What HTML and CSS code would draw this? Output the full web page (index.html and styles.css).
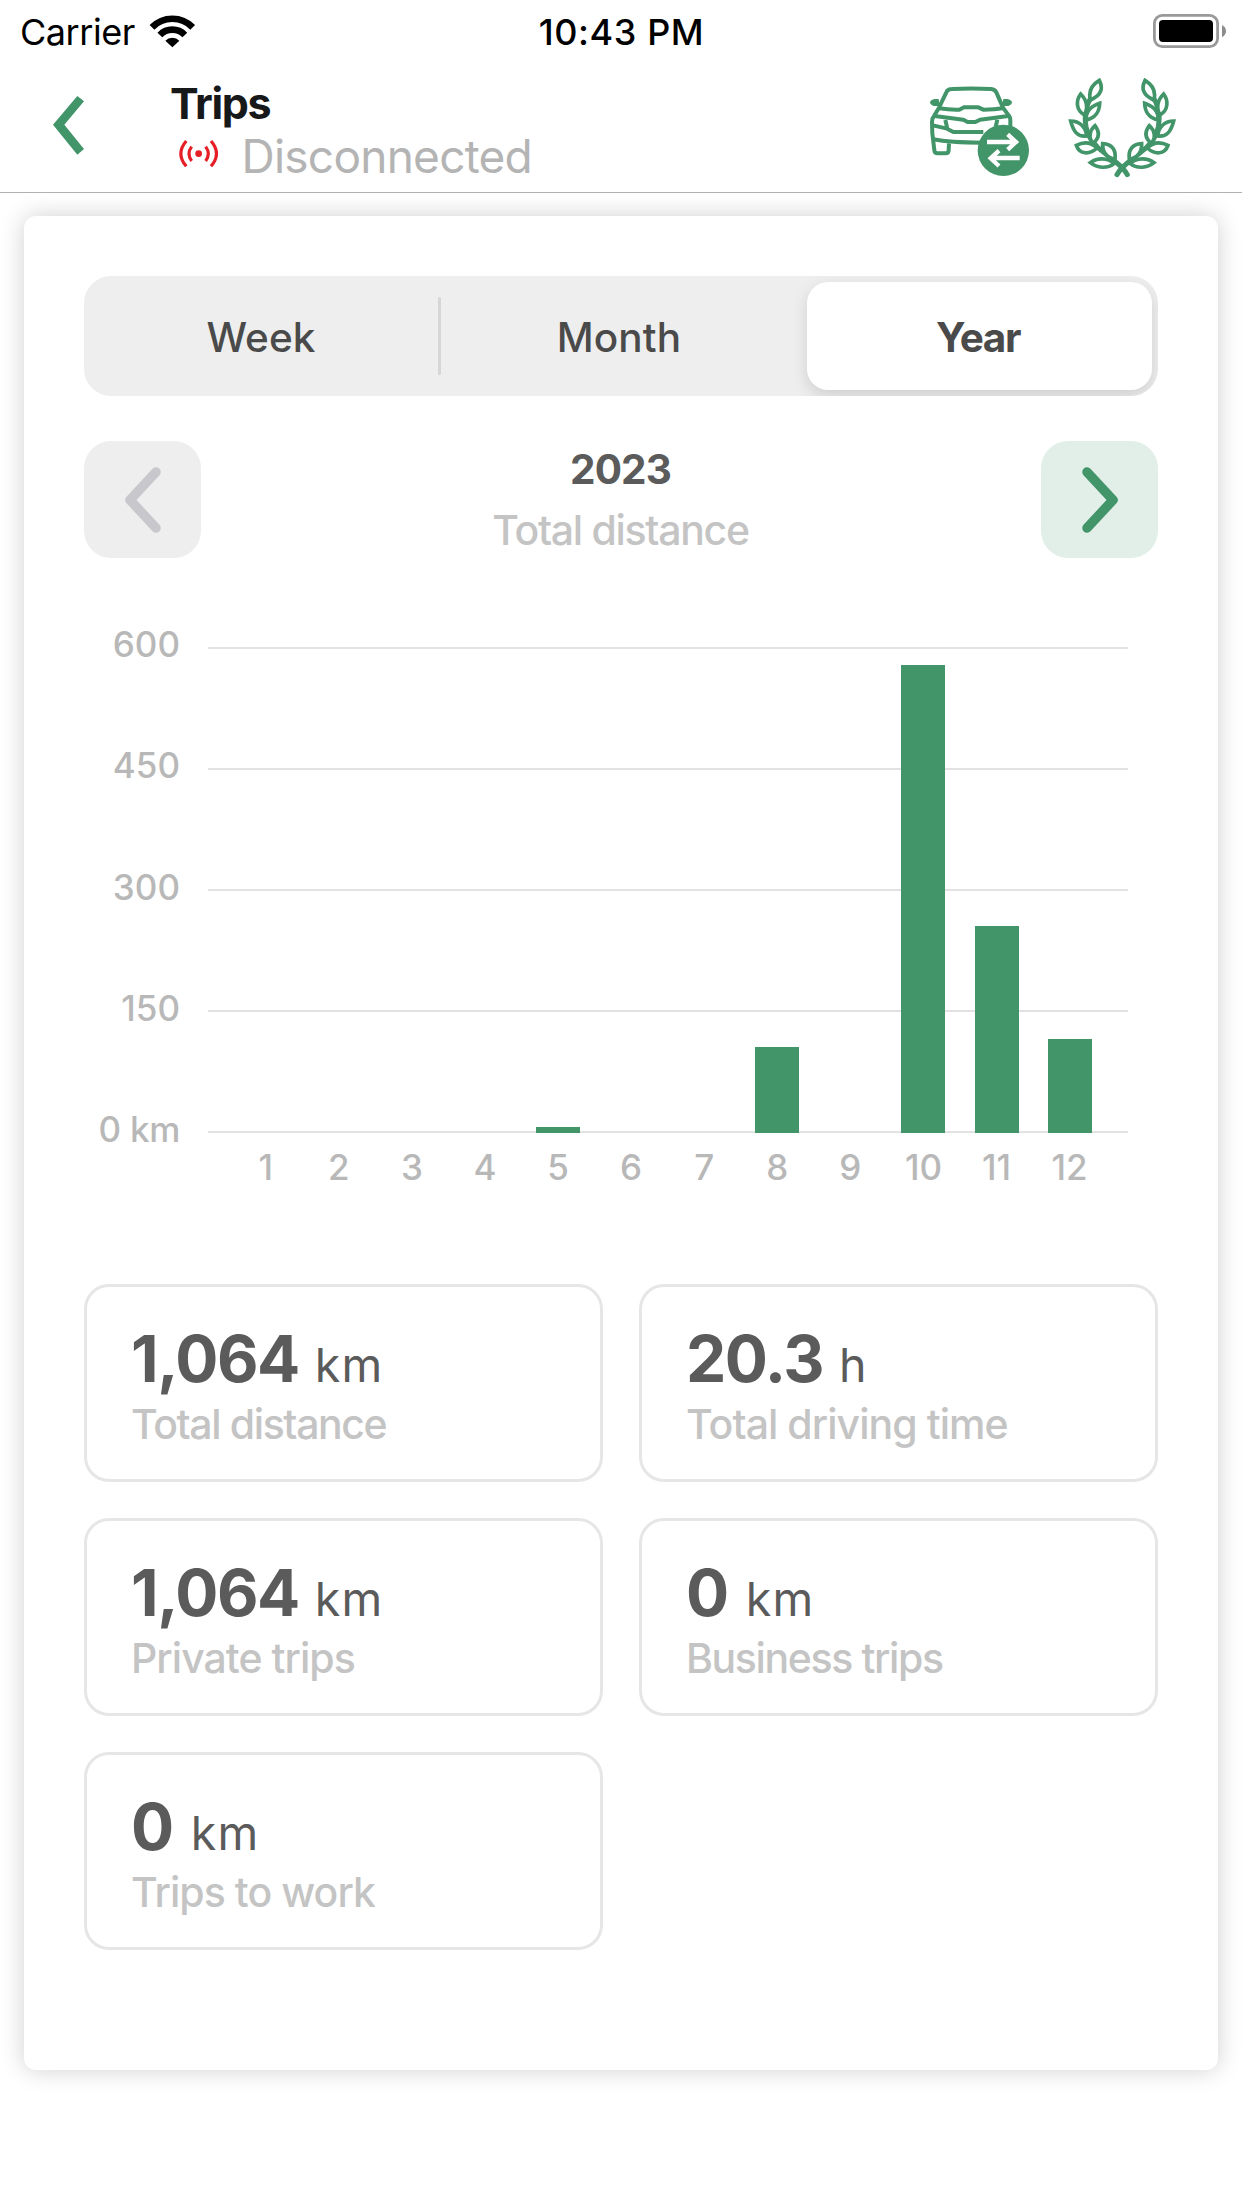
FILE: index.html
```html
<!DOCTYPE html>
<html lang="en">
<head>
<meta charset="utf-8">
<title>Trips</title>
<link rel="stylesheet" href="styles.css">
</head>
<body>
<div class="status-bar">
  <div class="carrier">
    <span class="carrier-name">Carrier</span>
    <svg class="wifi" viewBox="386 37 140 102" aria-hidden="true">
      <g fill="none" stroke="#000" stroke-width="20">
        <path d="M395 77A85 85 0 0 1 517 77"/>
        <path d="M418.5 100A52 52 0 0 1 493.5 100"/>
      </g>
      <path d="M456 137L435 117A29 29 0 0 1 477 117Z"/>
    </svg>
  </div>
  <div class="clock">10:43 PM</div>
  <div class="battery">
    <svg viewBox="0 0 74 34" aria-hidden="true">
      <rect x="1.4" y="1.4" width="63.2" height="31.2" rx="8" fill="none" stroke="#999" stroke-width="2.8"/>
      <rect x="6" y="6" width="54" height="22" rx="4"/>
      <path d="M69 11Q73 13 73 17T69 23Z" fill="#8c8c8c"/>
    </svg>
  </div>
</div>

<header class="app-bar">
  <svg class="back" viewBox="100 288 93 176" aria-label="Back"><path d="M173 288L193 304L134 374L193 447L173 464L100 374Z"/></svg>
  <div class="heading">
    <h1 class="title">Trips</h1>
    <div class="connection">
      <svg class="signal" viewBox="476 418 118 82" aria-hidden="true">
        <circle cx="535" cy="459" r="10"/>
        <path d="M514 438Q498 459 514 481M556 438Q572 459 556 481M498 421Q465 459 498 497M572 421Q605 459 572 497"/>
      </svg>
      <span class="connection-text">Disconnected</span>
    </div>
  </div>
  <svg class="car" viewBox="90 78 300 270" aria-label="Switch car">
    <g class="line">
      <path d="M147 250L146 270Q146 280 137 280H112Q104 280 103 271L97 220L96 185Q96 175 102 168L117 143L139 97Q143 87 155 87Q213 84 274 87Q284 88 289 97L309 143L326 166Q331 172 331 180V205"/>
      <path d="M117 145Q150 150 178 149L192 142H235L250 149Q285 149 308 145"/>
      <path d="M104 168L190 179L203 186H226L240 179L325 168"/>
      <path d="M99 196L141 206L160 216H250M136 180L142 206M292 179L287 200"/>
      <path d="M100 238Q150 248 245 248"/>
    </g>
    <path d="M90 127Q92 119 104 117L116 117L119 138H101Q91 135 90 127ZM336 127Q334 119 322 117L310 117L307 138H325Q335 135 336 127Z"/>
    <circle cx="310" cy="271" r="77"/>
    <path class="arrows" d="M261 246H346M323 223L348 246L323 269M359 294H274M297 272L272 295L297 318"/>
  </svg>
  <svg class="laurel" viewBox="504 54 324 300" aria-label="Achievements">
    <g id="branch">
      <path class="stem" d="M651 344Q662 325 685 307L740 262Q768 235 775 200Q781 165 772 140Q768 122 758 114"/>
      <path class="leaf" d="M735 61C724 82 726 105 762 120C768 95 757 74 735 61Z"/>
      <path class="leaf" d="M791 102C772 120 768 145 780 165C805 150 806 122 791 102Z"/>
      <path class="leaf" d="M734 130C735 155 744 172 774 180C776 152 760 139 734 130Z"/>
      <path class="leaf" d="M821 183C795 183 776 200 773 228C800 232 813 215 821 183Z"/>
      <path class="leaf" d="M748 197C733 217 735 235 754 250C768 234 765 212 748 197Z"/>
      <path class="leaf" d="M804 256C780 244 760 246 742 264C765 285 794 284 804 256Z"/>
      <path class="leaf" d="M725 251C697 252 684 270 688 298C715 292 726 276 725 251Z"/>
      <path class="leaf" d="M762 308C740 292 712 293 690 310C712 328 742 324 762 308Z"/>
    </g>
    <use href="#branch" transform="translate(1333 0) scale(-1 1)"/>
  </svg>
</header>

<main class="card">
  <div class="segments">
    <div class="segment">Week</div>
    <div class="divider"></div>
    <div class="segment">Month</div>
    <div class="segment selected">Year</div>
  </div>

  <div class="period">
    <div class="step disabled"><svg viewBox="0 0 117 117"><path d="M72 31L46 59L72 87"/></svg></div>
    <div class="period-text">
      <div class="period-year">2023</div>
      <div class="period-caption">Total distance</div>
    </div>
    <div class="step"><svg viewBox="0 0 117 117"><path d="M46 31L72 59L46 87"/></svg></div>
  </div>

  <div class="chart">
    <div class="y-axis"><span>600</span><span>450</span><span>300</span><span>150</span><span class="zero">0 km</span></div>
    <div class="plot">
      <div class="area">
        <div class="lines"><i></i><i></i><i></i><i></i><i></i></div>
        <div class="bars">
          <b></b><b></b><b></b><b></b><b style="height:1.15%"></b><b></b><b></b><b style="height:17.6%"></b><b></b><b style="height:96.4%"></b><b style="height:42.6%"></b><b style="height:19.4%"></b>
        </div>
      </div>
      <div class="x-axis"><span>1</span><span>2</span><span>3</span><span>4</span><span>5</span><span>6</span><span>7</span><span>8</span><span>9</span><span>10</span><span>11</span><span>12</span></div>
    </div>
  </div>

  <div class="stats">
    <div class="stat"><div class="value"><strong>1,064</strong><span>km</span></div><div class="label tight">Total distance</div></div>
    <div class="stat"><div class="value"><strong>20.3</strong><span>h</span></div><div class="label">Total driving time</div></div>
    <div class="stat"><div class="value"><strong>1,064</strong><span>km</span></div><div class="label">Private trips</div></div>
    <div class="stat"><div class="value"><strong class="zero">0</strong><span>km</span></div><div class="label tight">Business trips</div></div>
    <div class="stat"><div class="value"><strong class="zero">0</strong><span>km</span></div><div class="label">Trips to work</div></div>
  </div>
</main>
</body>
</html>
```
FILE: styles.css
```css
:root {
  --green: #429469;
}

* {
  box-sizing: border-box;
}

body {
  margin: 0;
  min-height: 2208px;
  background: #fff;
  font-family: Inter, "Liberation Sans", sans-serif;
}

svg {
  display: block;
  flex: none;
}

/* Status bar */
.status-bar {
  display: grid;
  grid-template-columns: 1fr auto 1fr;
  align-items: center;
  height: 60px;
  padding: 0 15px 0 20px;
  font-size: 36px;
  line-height: 60px;
  color: #000;
}

.carrier {
  display: flex;
  align-items: center;
}

.carrier-name {
  width: 129px;
  padding-top: 2px;
  letter-spacing: -0.45px;
}

.wifi {
  width: 46.7px;
  height: 34px;
}

.clock {
  padding: 2px 4px 0 0;
  font-weight: 500;
  letter-spacing: 0.6px;
}

.battery svg {
  width: 74px;
  height: 34px;
  margin-left: auto;
}

/* App bar */
.app-bar {
  display: flex;
  align-items: flex-start;
  height: 133px;
  padding: 0 66px 0 53px;
  border-bottom: 1px solid #b0b0b0;
}

.app-bar svg {
  fill: var(--green);
}

.app-bar .back {
  width: 31px;
  height: 58.7px;
  margin: 36px 86px 0 0;
}

.heading {
  flex: 1;
  padding-top: 18px;
}

.title {
  margin: 0;
  font-size: 43px;
  font-weight: 700;
  line-height: 51px;
  letter-spacing: -1.35px;
  color: #17181a;
}

.connection {
  display: flex;
  align-items: center;
  height: 54px;
  padding-left: 8.7px;
}

.app-bar .signal {
  width: 39.3px;
  height: 27.3px;
  margin: 0 23.5px 5px 0;
  fill: #e61e25;
}

.signal path {
  fill: none;
  stroke: #e61e25;
  stroke-width: 9.5;
}

.connection-text {
  font-size: 46px;
  line-height: 54px;
  letter-spacing: -0.75px;
  color: #b4b4b4;
}

.car {
  width: 100px;
  height: 90px;
  margin: 26px 38px 0 0;
}

.car .line {
  fill: none;
  stroke: var(--green);
  stroke-width: 12;
  stroke-linejoin: round;
}

.car .arrows {
  fill: none;
  stroke: #fff;
  stroke-width: 13;
}

.laurel {
  width: 108px;
  height: 100px;
  margin-top: 18px;
}

.laurel .stem {
  fill: none;
  stroke: var(--green);
  stroke-width: 15;
  stroke-linecap: round;
}

.laurel .leaf {
  fill: #fff;
  stroke: var(--green);
  stroke-width: 11;
}

/* Card */
.card {
  height: 1854px;
  margin: 23px 24px 0;
  padding: 60px;
  border-radius: 12px;
  background: #fff;
  box-shadow: 0 0 24px rgba(0, 0, 0, 0.19);
}

.segments {
  display: grid;
  grid-template-columns: 354px 3px 356px 1fr;
  height: 120px;
  border-radius: 27px;
  background: #eee;
  overflow: hidden;
}

.segment {
  display: flex;
  align-items: center;
  justify-content: center;
  padding-top: 2px;
  font-size: 40.5px;
  font-weight: 500;
  letter-spacing: 0.1px;
  color: #4a4a4a;
}

.segment.selected {
  margin: 6px 6px 6px 10px;
  padding-right: 3px;
  border-radius: 21px;
  background: #fff;
  box-shadow: 0 6px 16px rgba(0, 0, 0, 0.13);
  font-weight: 700;
  letter-spacing: -1.4px;
}

.divider {
  margin: 21px 0;
  border-radius: 2px;
  background: #d6d6d6;
}

/* Period stepper */
.period {
  display: flex;
  justify-content: space-between;
  height: 117px;
  margin-top: 45px;
}

.step {
  width: 117px;
  border-radius: 27px;
  background: #e2efe9;
}

.step path {
  fill: none;
  stroke: var(--green);
  stroke-width: 9.5;
  stroke-linecap: round;
  stroke-linejoin: round;
}

.step.disabled {
  background: #eee;
}

.step.disabled path {
  stroke: #c7c7cc;
}

.period-text {
  padding: 5px 1px 0 0;
  text-align: center;
  line-height: 48px;
}

.period-year {
  font-size: 40.5px;
  font-weight: 700;
  letter-spacing: -0.9px;
  color: #5b5b5b;
}

.period-caption {
  margin-top: 12px;
  font-size: 41px;
  font-weight: 450;
  letter-spacing: -1.3px;
  color: #c4c4c4;
}

/* Bar chart */
.chart {
  display: flex;
  align-items: flex-start;
  gap: 27.6px;
  margin-top: 66px;
  font-size: 35px;
  font-weight: 500;
  line-height: 40px;
  color: #b8b8b8;
}

.y-axis {
  display: flex;
  flex-direction: column;
  justify-content: space-between;
  width: 96px;
  height: 525px;
  text-align: right;
  letter-spacing: 0;
}

.y-axis .zero {
  letter-spacing: -0.3px;
}

.plot {
  width: 920.4px;
  padding-top: 23px;
}

.area {
  display: grid;
  height: 486px;
}

.lines,
.bars {
  grid-area: 1 / 1;
}

.lines {
  display: flex;
  flex-direction: column;
  justify-content: space-between;
}

.lines i {
  height: 2px;
  background: #e2e2e2;
}

.bars,
.x-axis {
  display: grid;
  grid-template-columns: repeat(12, 1fr);
  padding: 0 21.8px 0 21.6px;
}

.bars {
  align-items: end;
  justify-items: center;
}

.bars b {
  width: 44px;
  background: var(--green);
}

.x-axis {
  margin-top: 14px;
  text-align: center;
}

/* Totals */
.stats {
  display: grid;
  grid-template-columns: 1fr 1fr;
  grid-auto-rows: 198px;
  gap: 36px;
  margin-top: 97px;
}

.stat {
  padding: 34px 43px 0 44px;
  border: 3px solid #e6e6e6;
  border-radius: 25px;
}

.value {
  display: flex;
  align-items: baseline;
  gap: 16px;
  height: 76px;
  line-height: 76px;
  color: #5b5b5b;
}

.value strong {
  font-size: 64px;
  font-weight: 700;
  letter-spacing: -1.45px;
}

.value .zero {
  letter-spacing: 0.5px;
}

.value span {
  font-size: 46.5px;
  letter-spacing: 1.2px;
}

.label {
  margin-top: 3px;
  font-size: 41px;
  font-weight: 450;
  line-height: 48px;
  letter-spacing: -0.95px;
  color: #c4c4c4;
}

.label.tight {
  letter-spacing: -1.38px;
}
```
